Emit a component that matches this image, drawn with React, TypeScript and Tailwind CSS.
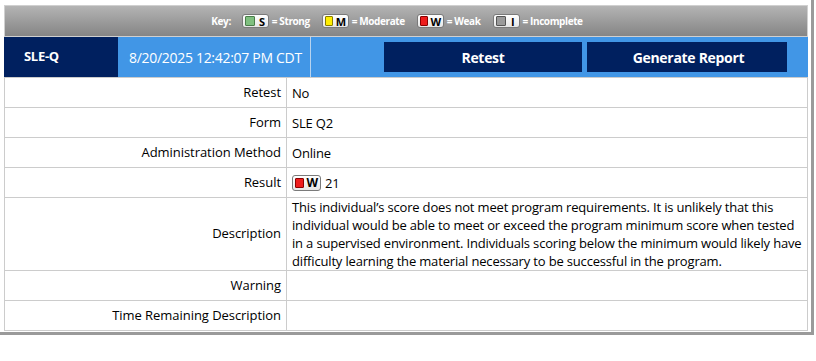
import type { ReactNode } from 'react';

type Level = 'S' | 'M' | 'W' | 'I';

const swatch: Record<Level, string> = {
  S: 'bg-[#7fbf7f] border-[#4a7d4a]',
  M: 'bg-[#ffee00] border-[#8a7d00]',
  W: 'bg-[#ee1c1c] border-[#8a0000]',
  I: 'bg-[#9a9a9a] border-[#555]',
};

function Badge({ level, small }: { level: Level; small?: boolean }) {
  return (
    <span
      className={`inline-flex items-center gap-[3px] rounded-[3px] border border-[#7a7a7a] bg-gradient-to-b from-white to-[#e6e6e6] ${
        small ? 'h-[14px] w-[27px] px-[2px]' : 'h-[16px] w-[29px] px-[2px]'
      }`}
    >
      <span className={`inline-block h-[10px] w-[10px] rounded-[1px] border ${swatch[level]}`} />
      <span
        className={`flex-1 text-center font-bold leading-none text-black ${
          small ? 'text-[11px]' : 'text-[12px]'
        }`}
      >
        {level}
      </span>
    </span>
  );
}

const rows: { label: string; value: ReactNode; tall?: boolean }[] = [
  { label: 'Retest', value: 'No' },
  { label: 'Form', value: 'SLE Q2' },
  { label: 'Administration Method', value: 'Online' },
  {
    label: 'Result',
    value: (
      <span className="flex items-center gap-[4px]">
        <Badge level="W" />
        <span>21</span>
      </span>
    ),
  },
  {
    label: 'Description',
    tall: true,
    value:
      'This individual’s score does not meet program requirements. It is unlikely that this individual would be able to meet or exceed the program minimum score when tested in a supervised environment. Individuals scoring below the minimum would likely have difficulty learning the material necessary to be successful in the program.',
  },
  { label: 'Warning', value: '' },
  { label: 'Time Remaining Description', value: '' },
];

function App() {
  return (
    <div className="min-h-screen bg-white font-['Open_Sans',sans-serif]">
      <div className="w-[814px] border-b-[3px] border-r-[3px] border-[#9a9a9a] pb-px pl-[4px] pr-[3px] pt-[5px]">
        <div className="flex h-[32px] items-center justify-center border border-[#d0d0d0] bg-gradient-to-b from-[#b4b4b4] to-[#858585] pr-[18px] text-[10px] font-bold tracking-[-0.4px] text-white">
          <span className="mr-[11px]">Key:</span>
          <span className="flex items-center gap-[3px]">
            <Badge level="S" small />
            <span>= Strong</span>
          </span>
          <span className="ml-[12px] flex items-center gap-[3px]">
            <Badge level="M" small />
            <span>= Moderate</span>
          </span>
          <span className="ml-[12px] flex items-center gap-[3px]">
            <Badge level="W" small />
            <span>= Weak</span>
          </span>
          <span className="ml-[12px] flex items-center gap-[3px]">
            <Badge level="I" small />
            <span>= Incomplete</span>
          </span>
        </div>

        <div className="flex h-[40px] bg-[#4196e6] text-white">
          <div className="flex w-[114px] items-center bg-[#00205f] pl-[20px] text-[13px] font-bold tracking-[-0.3px]">
            SLE-Q
          </div>
          <div className="flex w-[193px] items-center border-r border-[#b7d3ef] pl-[11px] text-[14px] tracking-[-0.3px]">
            8/20/2025 12:42:07 PM CDT
          </div>
          <div className="flex flex-1 items-center gap-[5px] pl-[73px] pr-[19px]">
            <button className="h-[30px] w-[198px] bg-[#00205f] text-[14px] font-bold tracking-[-0.3px]">
              Retest
            </button>
            <button className="h-[30px] w-[200px] bg-[#00205f] pl-[3px] text-[14px] font-bold tracking-[-0.3px]">
              Generate Report
            </button>
          </div>
        </div>

        <table className="w-full border-collapse text-[13px] text-black">
          <tbody>
            {rows.map((row) => (
              <tr key={row.label} className={row.tall ? 'h-[73px]' : 'h-[30px]'}>
                <td className="w-[282px] border border-[#cccccc] pr-[5px] text-right align-middle tracking-[-0.05px]">
                  {row.label}
                </td>
                <td className="border border-[#cccccc] pl-[5px] pr-0 align-middle leading-[18px] tracking-[-0.17px]">
                  {row.value}
                </td>
              </tr>
            ))}
          </tbody>
        </table>
      </div>
    </div>
  );
}

export default App;
